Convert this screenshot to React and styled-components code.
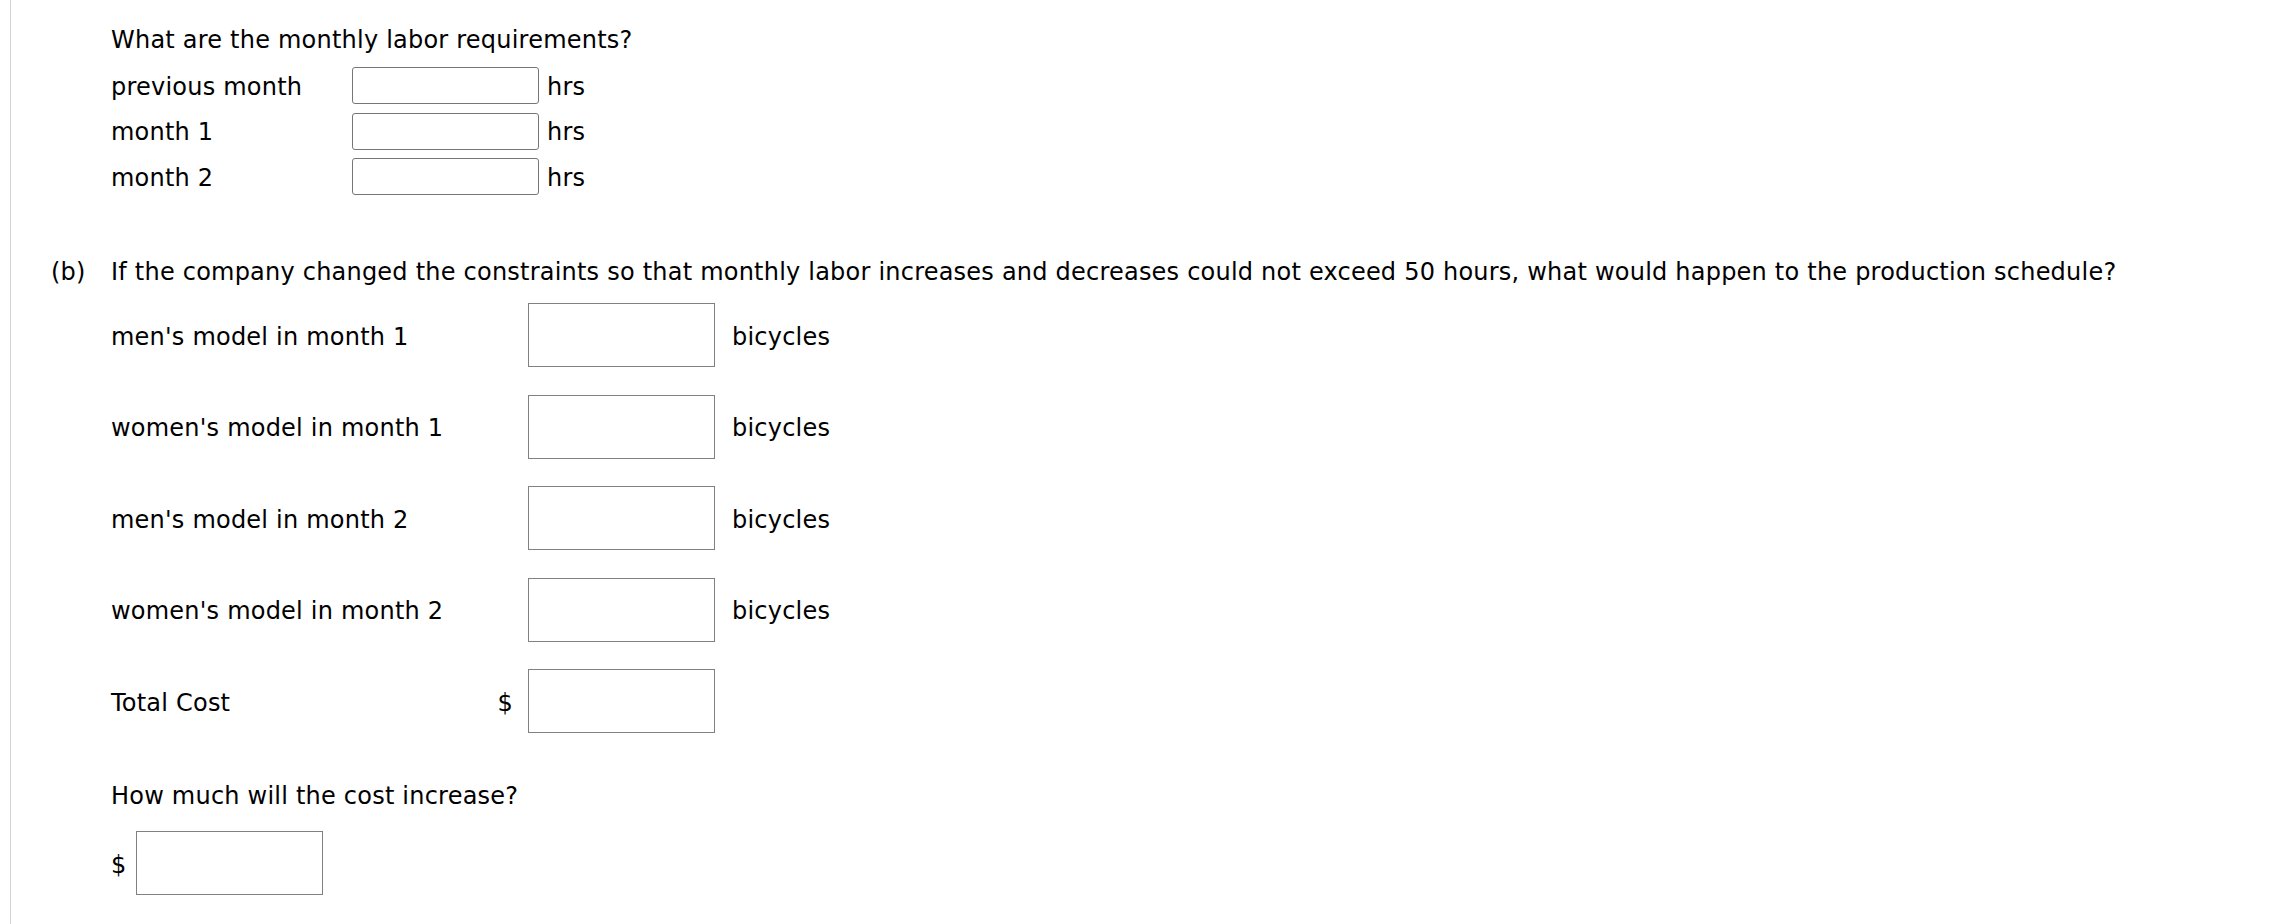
import React from 'react';
import styled, { createGlobalStyle } from 'styled-components';

const GlobalStyle = createGlobalStyle`
  html, body {
    margin: 0;
    padding: 0;
    background: #fff;
  }
  body {
    font-family: 'DejaVu Sans', Verdana, sans-serif;
    font-size: 24px;
    line-height: 28px;
    letter-spacing: 0.22px;
    color: #000;
  }
`;

const Page = styled.div`
  margin-left: 10px;
  border-left: 1px solid #d3d3d3;
  min-height: 100vh;
  padding: 26px 0 0 40px;
  box-sizing: border-box;
`;

const Indented = styled.div`
  padding-left: 60px;
`;

const Question = styled.p`
  margin: 0;
  margin-bottom: ${(p) => p.$after || 0}px;
`;

const LaborGrid = styled.div`
  display: grid;
  grid-template-columns: 241px 187px auto;
  grid-auto-rows: 37px;
  row-gap: 8.5px;
  align-items: center;
`;

const Label = styled.span`
  white-space: nowrap;
  padding-top: ${(p) => p.$nudge || 0}px;
`;

const Unit = styled.span`
  padding-left: ${(p) => p.$pad}px;
  padding-top: ${(p) => p.$nudge || 0}px;
  white-space: nowrap;
`;

const RoundBox = styled.input.attrs({ type: 'text' })`
  box-sizing: border-box;
  width: 187px;
  height: 37px;
  border: 1px solid #767676;
  border-radius: 3px;
  background: #fff;
  padding: 0 4px;
  font: inherit;
  outline: none;
`;

const AnswerBox = styled.input.attrs({ type: 'text' })`
  box-sizing: border-box;
  width: 187px;
  height: 64px;
  border: 1px solid #808080;
  border-radius: 0;
  background: #fff;
  padding: 0 4px;
  font: inherit;
  outline: none;
`;

const PartRow = styled.div`
  display: flex;
  margin-top: 63px;
`;

const PartTag = styled.span`
  width: 60px;
  flex-shrink: 0;
`;

const PartBody = styled.div`
  flex: 1;
`;

const ScheduleGrid = styled.div`
  display: grid;
  grid-template-columns: 370px 47px 187px auto;
  grid-auto-rows: 64px;
  row-gap: 27.5px;
  align-items: center;
  margin-bottom: 49px;
`;

const Currency = styled.span`
  text-align: right;
  padding-right: 15px;
  padding-top: 3px;
`;

const MoneyLine = styled.div`
  display: flex;
  align-items: center;
  gap: 9px;
  margin-top: 21px;

  & > span {
    padding-top: 3px;
  }
`;

const labor = ['previous month', 'month 1', 'month 2'];

const schedule = [
  "men's model in month 1",
  "women's model in month 1",
  "men's model in month 2",
  "women's model in month 2",
];

export default function App() {
  return (
    <>
      <GlobalStyle />
      <Page>
        <Indented>
          <Question $after={13}>What are the monthly labor requirements?</Question>
          <LaborGrid>
            {labor.map((l) => (
              <React.Fragment key={l}>
                <Label $nudge={2}>{l}</Label>
                <RoundBox />
                <Unit $pad={8} $nudge={2}>hrs</Unit>
              </React.Fragment>
            ))}
          </LaborGrid>
        </Indented>

        <PartRow>
          <PartTag>(b)</PartTag>
          <PartBody>
            <Question $after={17}>
              If the company changed the constraints so that monthly labor increases and decreases could not exceed 50 hours, what would happen to the production schedule?
            </Question>
            <ScheduleGrid>
              {schedule.map((s) => (
                <React.Fragment key={s}>
                  <Label $nudge={3}>{s}</Label>
                  <Currency />
                  <AnswerBox />
                  <Unit $pad={17} $nudge={3}>bicycles</Unit>
                </React.Fragment>
              ))}
              <Label $nudge={3}>Total Cost</Label>
              <Currency>$</Currency>
              <AnswerBox />
              <span />
            </ScheduleGrid>
            <Question>How much will the cost increase?</Question>
            <MoneyLine>
              <span>$</span>
              <AnswerBox />
            </MoneyLine>
          </PartBody>
        </PartRow>
      </Page>
    </>
  );
}
